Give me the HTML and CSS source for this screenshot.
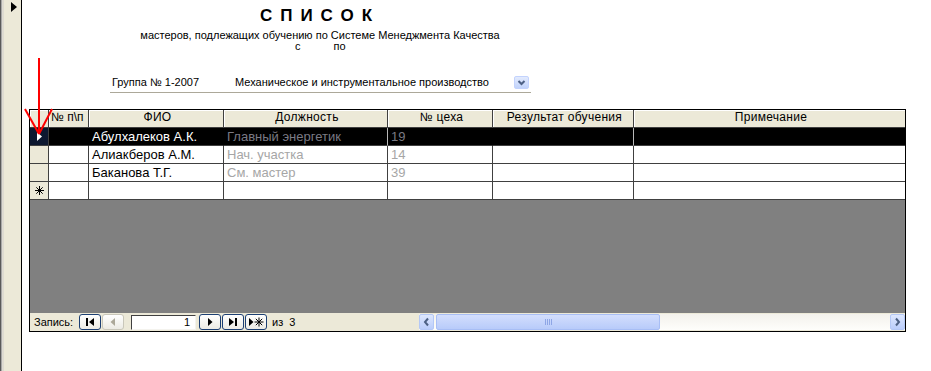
FILE: index.html
```html
<!DOCTYPE html>
<html>
<head>
    <meta charset="utf-8">
    <link rel="stylesheet" href="styles.css">
</head>
<body>
<div class="window">
    <div class="edge"></div>
    <div class="strip"><span class="strip-tri"></span></div>
    <div class="form">
        <div class="heading">
            <div class="title">СПИСОК</div>
            <div class="subtitle">мастеров, подлежащих обучению по Системе Менеджмента Качества</div>
            <div class="dates"><span>с</span><span>по</span></div>
        </div>

        <div class="group">
            <span class="group-no">Группа № 1-2007</span>
            <span class="group-name">Механическое и инструментальное производство</span>
            <span class="drop">
                <svg width="15" height="13" viewBox="0 0 15 13"><polyline points="4.5,5 7.5,8 10.5,5" fill="none" stroke="#4d6185" stroke-width="2"/></svg>
            </span>
        </div>

        <div class="sheet">
            <div class="cell head sel-col"></div>
            <div class="cell head left">№ п\п</div>
            <div class="cell head">ФИО</div>
            <div class="cell head">Должность</div>
            <div class="cell head">№ цеха</div>
            <div class="cell head">Результат обучения</div>
            <div class="cell head last">Примечание</div>

            <div class="cell sel-col current">
                <svg width="19" height="17" viewBox="0 0 19 17"><polygon points="7,4 12,8.5 7,13" fill="#fff"/></svg>
            </div>
            <div class="cell dark"></div>
            <div class="cell dark name">Абулхалеков А.К.</div>
            <div class="cell dark dim split">Главный энергетик</div>
            <div class="cell dark dim">19</div>
            <div class="cell dark split"></div>
            <div class="cell dark last"></div>

            <div class="cell sel-col"></div>
            <div class="cell"></div>
            <div class="cell">Алиакберов А.М.</div>
            <div class="cell grey">Нач. участка</div>
            <div class="cell grey">14</div>
            <div class="cell"></div>
            <div class="cell last"></div>

            <div class="cell sel-col"></div>
            <div class="cell"></div>
            <div class="cell">Баканова Т.Г.</div>
            <div class="cell grey">См. мастер</div>
            <div class="cell grey">39</div>
            <div class="cell"></div>
            <div class="cell last"></div>

            <div class="cell sel-col">
                <svg width="19" height="17" viewBox="0 0 19 17">
                    <g stroke="#000" stroke-width="1">
                        <line x1="9.5" y1="4" x2="9.5" y2="13"/>
                        <line x1="5" y1="8.5" x2="14" y2="8.5"/>
                        <line x1="6.3" y1="5.3" x2="12.7" y2="11.7"/>
                        <line x1="12.7" y1="5.3" x2="6.3" y2="11.7"/>
                    </g>
                </svg>
            </div>
            <div class="cell"></div>
            <div class="cell"></div>
            <div class="cell"></div>
            <div class="cell"></div>
            <div class="cell"></div>
            <div class="cell last"></div>

            <div class="blank"></div>

            <div class="nav">
                <span class="nav-label">Запись:</span>
                <span class="nb">
                    <svg width="20" height="14" viewBox="0 0 20 14"><rect x="6" y="3" width="2" height="8" fill="#000"/><polygon points="14,3 9,7 14,11" fill="#000"/></svg>
                </span>
                <span class="nb off">
                    <svg width="20" height="14" viewBox="0 0 20 14"><polygon points="12,3 7.5,7 12,11" fill="#aca899"/></svg>
                </span>
                <span class="rec">1</span>
                <span class="nb next">
                    <svg width="20" height="14" viewBox="0 0 20 14"><polygon points="8,3 12.5,7 8,11" fill="#000"/></svg>
                </span>
                <span class="nb">
                    <svg width="20" height="14" viewBox="0 0 20 14"><polygon points="6,3 11,7 6,11" fill="#000"/><rect x="12" y="3" width="2" height="8" fill="#000"/></svg>
                </span>
                <span class="nb">
                    <svg width="20" height="14" viewBox="0 0 20 14">
                        <polygon points="3,3 7.5,7 3,11" fill="#000"/>
                        <g stroke="#000" stroke-width="1">
                            <line x1="13" y1="2.5" x2="13" y2="11.5"/>
                            <line x1="8.5" y1="7" x2="17.5" y2="7"/>
                            <line x1="9.8" y1="3.8" x2="16.2" y2="10.2"/>
                            <line x1="16.2" y1="3.8" x2="9.8" y2="10.2"/>
                        </g>
                    </svg>
                </span>
                <span class="nav-of">из&nbsp;&nbsp;3</span>

                <div class="scroller">
                    <span class="sb-btn">
                        <svg width="13" height="14" viewBox="0 0 13 14"><polyline points="8,3.5 5,7 8,10.5" fill="none" stroke="#4d6185" stroke-width="2"/></svg>
                    </span>
                    <span class="thumb"><span class="grip"></span></span>
                    <span class="track"></span>
                    <span class="sb-btn">
                        <svg width="13" height="14" viewBox="0 0 13 14"><polyline points="5,3.5 8,7 5,10.5" fill="none" stroke="#4d6185" stroke-width="2"/></svg>
                    </span>
                </div>
            </div>
        </div>
    </div>
</div>

<svg class="marker" width="931" height="371" viewBox="0 0 931 371">
    <g stroke="#ff0000" stroke-width="2" fill="none">
        <line x1="39" y1="58" x2="39" y2="134"/>
        <line x1="25" y1="109" x2="39" y2="134"/>
        <line x1="52" y1="109" x2="39" y2="134"/>
    </g>
</svg>
</body>
</html>
```

FILE: styles.css
```css
* {
  box-sizing: border-box;
}

body {
  margin: 0;
  background-color: white;
  font-family: "Liberation Sans", Arial, sans-serif;
  color: black;
  overflow: hidden;
}

.window {
  display: flex;
  height: 371px;
}

.edge {
  width: 4px;
  background: linear-gradient(to right, #5a5a5a 0 1px, #a8a8a8 1px 2px, #dedbd2 2px 4px);
}

.strip {
  width: 18px;
  background-color: #ece9d8;
  border-right: 1px solid black;
}

.strip-tri {
  display: block;
  width: 0;
  height: 0;
  margin: 2px 0 0 7px;
  border-left: 6px solid black;
  border-top: 5px solid transparent;
  border-bottom: 5px solid transparent;
}

.form {
  flex: 1;
}

/* heading */

.heading {
  margin-left: 98px;
  width: 400px;
  text-align: center;
}

.title {
  padding-top: 6px;
  font-size: 17px;
  line-height: 20px;
  font-weight: bold;
  letter-spacing: 8px;
}

.subtitle {
  margin-top: 3px;
  font-size: 11px;
  line-height: 12px;
}

.dates {
  display: flex;
  gap: 33px;
  padding-left: 175px;
  font-size: 11px;
  line-height: 10px;
}

/* group line */

.group {
  display: flex;
  margin: 25px 0 0 88px;
  width: 421px;
  height: 17px;
  border-bottom: 1px solid #aca899;
  font-size: 11px;
  line-height: 13px;
}

.group-no {
  width: 125px;
  padding-left: 2px;
}

.group-name {
  flex: 1;
}

.drop {
  width: 15px;
  height: 13px;
  margin-right: 2px;
  border: 1px solid #c3d3fd;
  border-radius: 2px;
  background: linear-gradient(#e3ebfe, #c1d3fb);
}

.drop svg {
  display: block;
  margin: -1px 0 0 -1px;
}

/* datasheet */

.sheet {
  display: grid;
  grid-template-columns: 19px 40px 135px 164px 105px 141px 271px;
  margin: 16px 0 0 7px;
  width: 877px;
  border: 1px solid black;
}

.cell {
  height: 18px;
  padding-left: 3px;
  border-right: 1px solid #404040;
  border-bottom: 1px solid #404040;
  font-size: 13px;
  line-height: 18px;
  white-space: nowrap;
  overflow: hidden;
}

.cell.last {
  border-right: none;
}

.cell svg {
  display: block;
}

.head {
  background-color: #ece9d8;
  box-shadow: inset 1px 1px 0 white;
  text-align: center;
  font-size: 12px;
  line-height: 15px;
  letter-spacing: 0.3px;
}

.head.left {
  text-align: left;
  padding-left: 2px;
  letter-spacing: 0;
}

.sel-col {
  padding-left: 0;
  background-color: #ece9d8;
}

.sel-col.current {
  background-color: #0d1830;
}

.dark {
  background-color: black;
  border-right-color: black;
}

.dark.name {
  color: white;
}

.dark.dim {
  color: #7a7a84;
}

.dark.split {
  border-right-color: #b8b8b8;
}

.grey {
  color: #a6a6a6;
}

.blank {
  grid-column: 1 / -1;
  height: 113px;
  background-color: #808080;
}

/* record navigation */

.nav {
  grid-column: 1 / -1;
  display: flex;
  align-items: center;
  height: 18px;
  background-color: #ece9d8;
  font-size: 11px;
}

.nav-label {
  width: 49px;
  padding-left: 4px;
}

.nb {
  width: 22px;
  height: 16px;
  margin-right: 1px;
  border: 1px solid #1c3f73;
  border-radius: 3px;
  background: linear-gradient(white, #ecebe4);
}

.nb.off {
  border-color: #c9c7ba;
}

.nb.next {
  margin-left: 3px;
}

.rec {
  width: 65px;
  height: 15px;
  margin-left: 6px;
  padding-right: 5px;
  border-top: 1px solid #404040;
  border-left: 1px solid #404040;
  border-bottom: 1px solid #f4f3ee;
  border-right: 1px solid #f4f3ee;
  background-color: white;
  text-align: right;
  line-height: 13px;
}

.nav-of {
  margin-left: 4px;
}

.scroller {
  display: flex;
  margin-left: auto;
  width: 486px;
  height: 16px;
  background: linear-gradient(#f3f1ec, #fefefb);
}

.sb-btn {
  width: 15px;
  height: 16px;
  border: 1px solid #b4c8f6;
  border-radius: 2px;
  background: linear-gradient(#dde7fe, #bacdfb);
}

.thumb {
  display: flex;
  align-items: center;
  justify-content: center;
  width: 224px;
  margin-left: 2px;
  border: 1px solid #a8bef5;
  border-radius: 2px;
  background: linear-gradient(#d3defd, #b8cbfa);
}

.grip {
  width: 7px;
  height: 6px;
  background: repeating-linear-gradient(to right, #8ea6e6 0 1px, transparent 1px 2px);
}

.track {
  flex: 1;
}

.marker {
  position: absolute;
  left: 0;
  top: 0;
  pointer-events: none;
}
```
